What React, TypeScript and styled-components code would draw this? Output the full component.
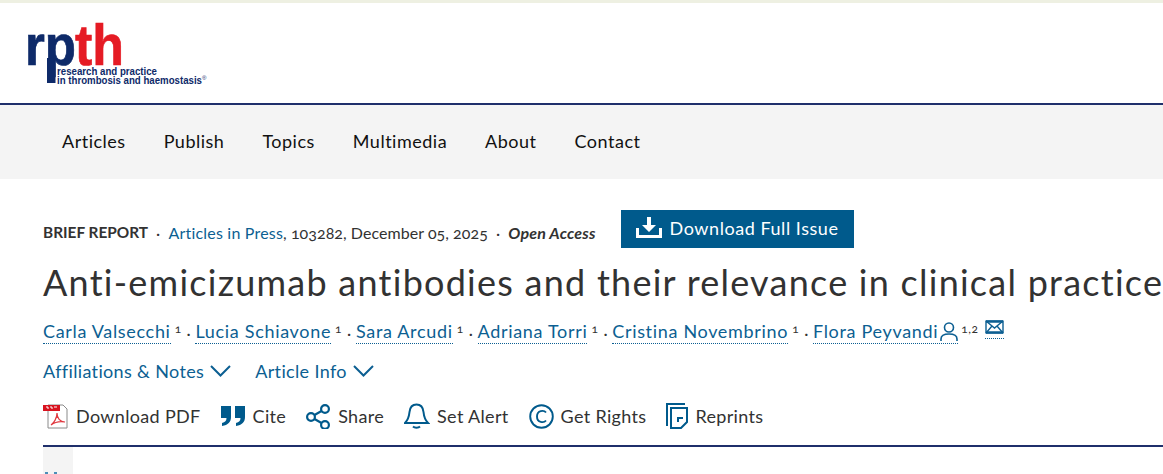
import React from "react";
import styled, { createGlobalStyle } from "styled-components";

const GlobalStyle = createGlobalStyle`
  html, body {
    margin: 0;
    padding: 0;
    background: #fff;
    overflow: hidden;
    font-family: "Lato", "Noto Sans", sans-serif;
    font-variant-numeric: oldstyle-nums;
    color: #323232;
  }
`;

const Page = styled.div`
  width: 1163px;
  height: 474px;
  overflow: hidden;
  border-top: 3px solid #eef0e2;
  box-sizing: border-box;
`;

const Masthead = styled.header`
  height: 102px;
  box-sizing: border-box;
  padding: 9px 0 0 25px;
  border-bottom: 2px solid #1f2f6b;
`;

const Nav = styled.nav`
  height: 74px;
  box-sizing: border-box;
  display: flex;
  align-items: center;
  gap: 38px;
  padding: 0 0 3px 62px;
  background: #f4f4f4;
`;

const NavLink = styled.a`
  font-size: 18px;
  color: #111;
  letter-spacing: 0.5px;
`;

const Article = styled.main`
  padding: 31px 0 0 43px;
`;

const MetaRow = styled.div`
  display: flex;
  align-items: center;
  height: 38px;
  font-size: 16px;
  letter-spacing: 0.2px;
  white-space: nowrap;
`;

const MetaText = styled.span`
  display: flex;
  align-items: center;
  padding-top: 6px;
`;

const Kind = styled.strong`
  font-size: 15.4px;
  font-weight: 700;
  letter-spacing: 0;
`;

const Dot = styled.span`
  margin: 0 8px;
`;

const BlueLink = styled.a`
  color: #0c5f92;
`;

const DateText = styled.span`
  letter-spacing: 0.05px;
`;

const OpenAccess = styled.em`
  font-weight: 700;
`;

const DownloadIssue = styled.button`
  display: flex;
  align-items: center;
  gap: 8px;
  flex: none;
  width: 233px;
  height: 38px;
  margin-left: 25px;
  padding: 0 0 2px 15px;
  border: 0;
  background: #005a8c;
  color: #fff;
  font: inherit;
  font-size: 18px;
  letter-spacing: 0.55px;
`;

const Title = styled.h1`
  margin: 12px 0 0;
  font-size: 36px;
  line-height: 44px;
  font-weight: 400;
  letter-spacing: 1.25px;
  white-space: nowrap;
  color: #323232;
`;

const Authors = styled.div`
  display: flex;
  align-items: center;
  margin-top: 14px;
  height: 28px;
  font-size: 18px;
  letter-spacing: 0.68px;
  white-space: nowrap;
`;

const Author = styled.a`
  display: inline-flex;
  align-items: center;
  gap: 2px;
  color: #0c5f92;
  border-bottom: 1px dotted #0c5f92;
  line-height: 23px;
`;

const Sup = styled.span<{ $tight?: boolean }>`
  font-size: 12px;
  letter-spacing: 0.5px;
  margin-left: ${(props) => (props.$tight ? "3px" : "4px")};
  position: relative;
  top: -4px;
`;

const AuthorDot = styled.span`
  margin: 0 4px 0 5px;
  font-size: 16px;
`;

const Mail = styled.a`
  display: inline-flex;
  margin: 0 0 6px 6px;
  padding-bottom: 4px;
  border-bottom: 1px dotted #0c5f92;
`;

const InfoRow = styled.div`
  display: flex;
  gap: 24px;
  margin-top: 12px;
  height: 26px;
  align-items: center;
`;

const InfoToggle = styled.a`
  display: flex;
  align-items: center;
  gap: 6px;
  font-size: 18px;
  letter-spacing: 0.35px;
  color: #0c5f92;
`;

const Toolbar = styled.div`
  display: flex;
  align-items: center;
  gap: 20px;
  height: 38px;
  margin-top: 13px;
  padding-bottom: 10px;
  border-bottom: 2px solid #1f2f6b;
`;

const Tool = styled.a`
  display: flex;
  align-items: center;
  gap: 7px;
  font-size: 18px;
  letter-spacing: 0.33px;
  color: #323232;
  svg {
    flex: none;
    display: block;
  }
`;

const Rail = styled.div`
  display: flex;
  gap: 6px;
  width: 30px;
  height: 27px;
  box-sizing: border-box;
  padding: 25px 0 0 2px;
  background: #f4f4f4;
`;

const RailMark = styled.span`
  width: 3px;
  height: 2px;
  background: #4b8fb8;
`;

const Logo = () => (
  <svg width="190" height="82" viewBox="0 0 190 82" style={{ display: "block" }}>
    <text x="0" y="53" fontFamily="Liberation Sans" fontWeight="700" fontSize="57" fill="#0e2a69" stroke="#0e2a69" strokeWidth="0.7" textLength="51" lengthAdjust="spacingAndGlyphs">rp</text>
    <rect x="22" y="46" width="8.500" height="25" fill="#0e2a69" />
    <text x="50" y="53" fontFamily="Liberation Sans" fontWeight="700" fontSize="57" fill="#e51b24" stroke="#e51b24" strokeWidth="0.7" textLength="49" lengthAdjust="spacingAndGlyphs">th</text>
    <text x="32" y="63" fontFamily="Liberation Sans" fontWeight="700" fontSize="10" fill="#0e2a69" textLength="100" lengthAdjust="spacingAndGlyphs">research and practice</text>
    <text x="32" y="72" fontFamily="Liberation Sans" fontWeight="700" fontSize="10" fill="#0e2a69" textLength="145" lengthAdjust="spacingAndGlyphs">in thrombosis and haemostasis</text>
    <text x="177" y="68" fontFamily="Liberation Sans" fontSize="6" fill="#0e2a69">®</text>
  </svg>
);

const PdfIcon = () => (
  <svg width="26" height="25" viewBox="0 0 26 25">
    <path d="M5 1H20L24 5V24H5Z" fill="#fff" stroke="#8a8a8a" />
    <rect x="0" y="1" width="17" height="6" fill="#d8131f" />
    <path d="M3 3h2v2M7 3h2v2M11 3h3" stroke="#fff" strokeWidth="1" fill="none" />
    <path d="M8 21C11 19 14 14 14 9C14 14 17 18 22 18C17 17 12 18 8 21Z" fill="none" stroke="#e0383f" strokeWidth="1.2" />
  </svg>
);

const CiteIcon = () => (
  <svg width="25" height="20" viewBox="0 0 25 20" fill="#005a8c">
    <path d="M0 0H10V11C10 16 7 19 1 20V17C4 16 5.500 15 5.500 12H0Z" />
    <path d="M14 0H24V11C24 16 21 19 15 20V17C18 16 19.500 15 19.500 12H14Z" />
  </svg>
);

const ShareIcon = () => (
  <svg width="25" height="25" viewBox="0 0 25 25" fill="none" stroke="#005a8c" strokeWidth="2.200">
    <circle cx="19" cy="5" r="3.900" />
    <circle cx="5" cy="13" r="3.900" />
    <circle cx="19" cy="21" r="3.900" />
    <path d="M8.500 11 15.500 7M8.500 15 15.500 19" />
  </svg>
);

const BellIcon = () => (
  <svg width="26" height="26" viewBox="0 0 26 26" fill="none" stroke="#005a8c" strokeWidth="2">
    <path d="M1 20H24C21 17 20 14 19.500 9C19 4 17 1.500 12.500 1.500C8 1.500 6 4 5.500 9C5 14 4 17 1 20Z" />
    <path d="M9 23.500C10.500 25 14.500 25 16 23.500" />
  </svg>
);

const RightsIcon = () => (
  <svg width="25" height="25" viewBox="0 0 25 25" fill="none" stroke="#005a8c" strokeWidth="1.900">
    <circle cx="12.500" cy="12.500" r="11.300" />
    <path d="M17 8.500C15 6 8 6 8 12.500C8 19 15 19 17 16.500" />
  </svg>
);

const ReprintsIcon = () => (
  <svg width="22" height="26" viewBox="0 0 22 26" fill="none" stroke="#005a8c" strokeWidth="2">
    <path d="M1 23V1H19" />
    <path d="M5 25V5H21V19L15 25Z" />
    <path d="M12 19V15H17" />
  </svg>
);

const UserIcon = () => (
  <svg width="18" height="20" viewBox="0 0 18 20" fill="none" stroke="#0c5f92" strokeWidth="1.600">
    <circle cx="9" cy="5.500" r="4.500" />
    <path d="M1 19V17C1 13.500 4 12 9 12C14 12 17 13.500 17 17V19" />
  </svg>
);

const MailIcon = () => (
  <svg width="19" height="14" viewBox="0 0 19 14" fill="none" stroke="#0c5f92" strokeWidth="1.400">
    <rect x="1" y="1.200" width="17" height="11.600" />
    <path d="M1 1.500H18M1 12.500H18" strokeWidth="2.400" />
    <path d="M1 1 9.500 8 18 1M1 13 7 6M18 13 12 6" />
  </svg>
);

const DownloadIcon = () => (
  <svg width="26" height="22" viewBox="0 0 26 22" fill="#fff">
    <path d="M11 0H15V8H20L13 15L6 8H11Z" />
    <path d="M0 11H3V18H23V11H26V21H0Z" />
  </svg>
);

const Chevron = () => (
  <svg width="21" height="12" viewBox="0 0 21 12" fill="none" stroke="#0c5f92" strokeWidth="2">
    <path d="M1 1 10.500 10.500 20 1" />
  </svg>
);

const authors = [
  "Carla Valsecchi",
  "Lucia Schiavone",
  "Sara Arcudi",
  "Adriana Torri",
  "Cristina Novembrino",
];

const tools = [
  { label: "Download PDF", icon: <PdfIcon /> },
  { label: "Cite", icon: <CiteIcon /> },
  { label: "Share", icon: <ShareIcon /> },
  { label: "Set Alert", icon: <BellIcon /> },
  { label: "Get Rights", icon: <RightsIcon /> },
  { label: "Reprints", icon: <ReprintsIcon /> },
];

const App: React.FC = () => (
  <Page>
    <GlobalStyle />
    <Masthead>
      <Logo />
    </Masthead>
    <Nav>
      {["Articles", "Publish", "Topics", "Multimedia", "About", "Contact"].map((item) => (
        <NavLink key={item}>{item}</NavLink>
      ))}
    </Nav>
    <Article>
      <MetaRow>
        <MetaText>
          <Kind>BRIEF REPORT</Kind>
          <Dot>·</Dot>
          <BlueLink>Articles in Press</BlueLink>
          <DateText>, 103282, December 05, 2025</DateText>
          <Dot>·</Dot>
          <OpenAccess>Open Access</OpenAccess>
        </MetaText>
        <DownloadIssue>
          <DownloadIcon />
          Download Full Issue
        </DownloadIssue>
      </MetaRow>
      <Title>Anti-emicizumab antibodies and their relevance in clinical practice</Title>
      <Authors>
        {authors.map((name) => (
          <React.Fragment key={name}>
            <Author>{name}</Author>
            <Sup>1</Sup>
            <AuthorDot>·</AuthorDot>
          </React.Fragment>
        ))}
        <Author>
          Flora Peyvandi
          <UserIcon />
        </Author>
        <Sup $tight>1,2</Sup>
        <Mail>
          <MailIcon />
        </Mail>
      </Authors>
      <InfoRow>
        <InfoToggle>
          Affiliations &amp; Notes
          <Chevron />
        </InfoToggle>
        <InfoToggle>
          Article Info
          <Chevron />
        </InfoToggle>
      </InfoRow>
      <Toolbar>
        {tools.map((tool) => (
          <Tool key={tool.label}>
            {tool.icon}
            {tool.label}
          </Tool>
        ))}
      </Toolbar>
      <Rail>
        <RailMark />
        <RailMark />
      </Rail>
    </Article>
  </Page>
);

export default App;
